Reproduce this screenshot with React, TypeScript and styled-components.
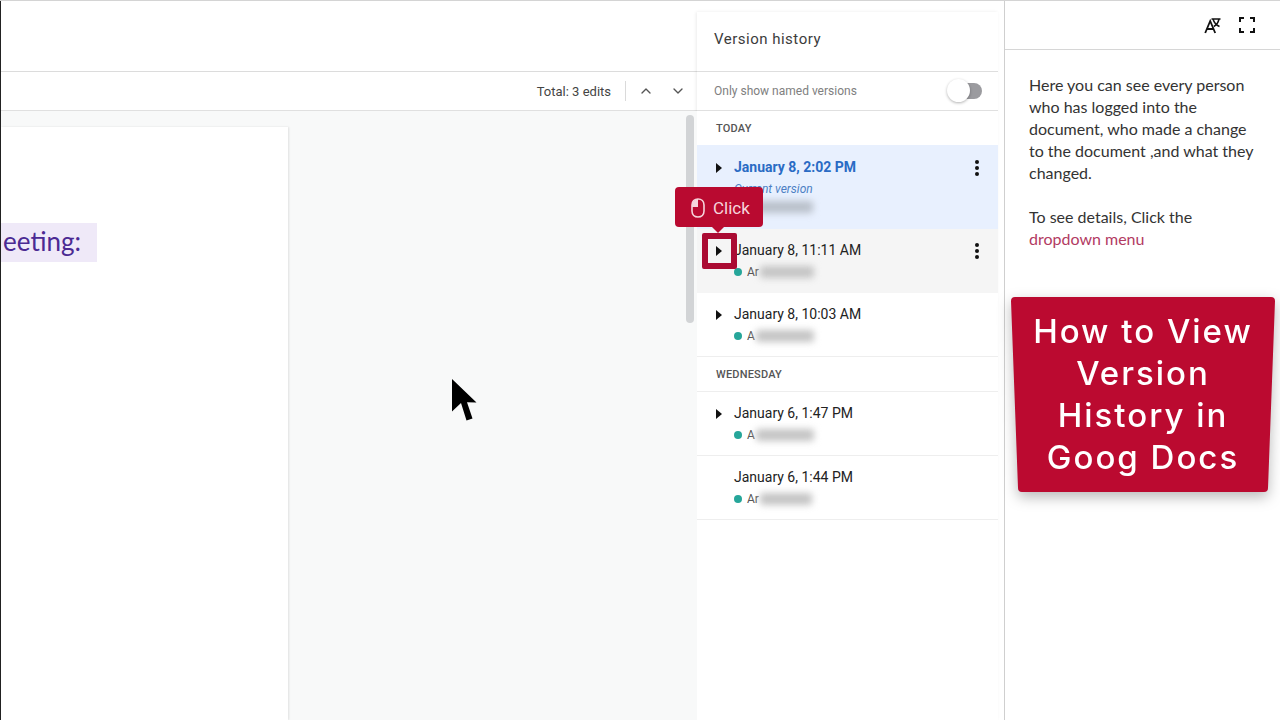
import React from "react";
import styled, { createGlobalStyle } from "styled-components";
import { ChevronUp, ChevronDown } from "lucide-react";

const GlobalStyle = createGlobalStyle`
  html, body {
    margin: 0;
    padding: 0;
    background: #fff;
    overflow: hidden;
  }
  * {
    box-sizing: border-box;
  }
`;

type Version = {
  time: string;
  initials: string;
  nameWidth: number;
  expandable?: boolean;
  current?: boolean;
  hovered?: boolean;
  menu?: boolean;
};

const today: Version[] = [
  { time: "January 8, 2:02 PM", initials: "", nameWidth: 78, expandable: true, current: true, menu: true },
  { time: "January 8, 11:11 AM", initials: "Ar", nameWidth: 54, expandable: true, hovered: true, menu: true },
  { time: "January 8, 10:03 AM", initials: "A", nameWidth: 58, expandable: true },
];

const wednesday: Version[] = [
  { time: "January 6, 1:47 PM", initials: "A", nameWidth: 58, expandable: true },
  { time: "January 6, 1:44 PM", initials: "Ar", nameWidth: 52 },
];

const VersionRow: React.FC<{ version: Version }> = ({ version }) => (
  <Row $current={version.current} $hovered={version.hovered}>
    <ArrowSlot>
      {version.expandable && (
        <svg width="8" height="10" viewBox="0 0 8 10">
          <path d="M1 0l6 5-6 5z" fill="#111" />
        </svg>
      )}
    </ArrowSlot>
    <RowBody>
      <Time $current={version.current}>{version.time}</Time>
      {version.current && <CurrentLabel>Current version</CurrentLabel>}
      <Author>
        {!version.current && <Dot />}
        {version.initials && <Initials>{version.initials}</Initials>}
        <BlurredName style={{ width: version.nameWidth }} $current={version.current} />
      </Author>
    </RowBody>
    {version.menu && (
      <MenuDots>
        <span />
        <span />
        <span />
      </MenuDots>
    )}
  </Row>
);

export default function App() {
  return (
    <Shell>
      <GlobalStyle />
      <DocColumn>
        <DocHeader />
        <DocToolbar>
          <EditCount>Total: 3 edits</EditCount>
          <ToolbarDivider />
          <ToolbarChevrons>
            <ChevronUp size={16} color="#555" strokeWidth={2} />
            <ChevronDown size={16} color="#555" strokeWidth={2} />
          </ToolbarChevrons>
        </DocToolbar>
        <DocBody>
          <Page>
            <Highlight>eeting:</Highlight>
          </Page>
          <ScrollThumb />
        </DocBody>
      </DocColumn>

      <HistoryPanel>
        <HistoryTitle>Version history</HistoryTitle>
        <ToggleRow>
          <ToggleLabel>Only show named versions</ToggleLabel>
          <Toggle>
            <Knob />
          </Toggle>
        </ToggleRow>
        <DayLabel $first>TODAY</DayLabel>
        {today.map((v) => (
          <VersionRow key={v.time} version={v} />
        ))}
        <DayLabel>WEDNESDAY</DayLabel>
        {wednesday.map((v) => (
          <VersionRow key={v.time} version={v} />
        ))}
      </HistoryPanel>

      <GuidePanel>
        <GuideBar>
          <svg width="18" height="18" viewBox="0 0 18 18" fill="none" stroke="#111">
            <path d="M1.200 17 6.200 5l5 12M3 13h6.600" strokeWidth="1.800" />
            <path d="M7.500 3h9M9 3c1 3.500 3 6 6.500 7.500M15 3c-.7 3.500-2.600 6-5.200 7.500" strokeWidth="1.500" />
          </svg>
          <svg width="18" height="18" viewBox="0 0 18 18" fill="none" stroke="#111" strokeWidth="2">
            <path d="M6 2H2v4M12 2h4v4M6 16H2v-4M12 16h4v-4" />
          </svg>
        </GuideBar>
        <GuideText>
          <p>
            Here you can see every person who has logged into the document, who made a change to the
            document ,and what they changed.
          </p>
          <p>
            To see details, Click the <GuideLink>dropdown menu</GuideLink>
          </p>
        </GuideText>
      </GuidePanel>

      <TitleCard>
        <TitleFace>
          How to View
          <br />
          Version
          <br />
          History in
          <br />
          Goog Docs
        </TitleFace>
      </TitleCard>

      <Callout>
        <svg width="14" height="20" viewBox="0 0 14 20" fill="none">
          <path d="M7 1C3.500 1 1 3.500 1 7v6c0 3.500 2.500 6 6 6s6-2.500 6-6V7c0-3.500-2.500-6-6-6z" stroke="#f6d5dc" strokeWidth="1.600" />
          <path d="M7 1C3.500 1 1 3.500 1 7v2h6z" fill="#f6d5dc" />
        </svg>
        Click
      </Callout>
      <ClickTarget />

      <Pointer width="28" height="46" viewBox="0 0 28 46">
        <path d="M1 1 25.500 24.500 16 24.200 21.500 40.500 15.500 42.500 10 25 1 33.500z" fill="#000" />
      </Pointer>
    </Shell>
  );
}

const Shell = styled.div`
  position: relative;
  display: flex;
  width: 1280px;
  height: 720px;
  overflow: hidden;
  border-top: 1px solid #d4d4d4;
  background: #fff;
  font-family: Roboto, "Liberation Sans", sans-serif;
`;

const DocColumn = styled.div`
  display: flex;
  flex-direction: column;
  width: 697px;
  flex-shrink: 0;
  border-left: 1px solid #222;
`;

const DocHeader = styled.div`
  height: 71px;
  flex-shrink: 0;
  border-bottom: 1px solid #dcdcdc;
`;

const DocToolbar = styled.div`
  display: flex;
  align-items: center;
  justify-content: flex-end;
  height: 39px;
  flex-shrink: 0;
  padding-right: 11px;
  border-bottom: 1px solid #e0e0e0;
`;

const EditCount = styled.span`
  font-size: 13px;
  color: #444;
`;

const ToolbarDivider = styled.div`
  width: 1px;
  height: 20px;
  margin: 0 12px 0 14px;
  background: #dadada;
`;

const ToolbarChevrons = styled.div`
  display: flex;
  gap: 16px;
`;

const DocBody = styled.div`
  position: relative;
  flex: 1;
  padding-top: 16px;
  background: #f8f9f9;
`;

const Page = styled.div`
  width: 287px;
  height: 100%;
  padding-top: 96px;
  background: #fff;
  box-shadow: 1px 0 2px rgba(0, 0, 0, 0.1);
`;

const Highlight = styled.div`
  display: flex;
  align-items: center;
  justify-content: flex-end;
  width: 96px;
  height: 39px;
  padding: 0 16px 3px 0;
  overflow: hidden;
  white-space: nowrap;
  background: #efe9f8;
  color: #4b2a93;
  font-family: Lato, "Noto Sans", sans-serif;
  font-size: 26px;
`;

const ScrollThumb = styled.div`
  position: absolute;
  top: 4px;
  right: 3px;
  width: 8px;
  height: 208px;
  border-radius: 4px;
  background: #d2d4d6;
`;

const HistoryPanel = styled.div`
  display: flex;
  flex-direction: column;
  width: 301px;
  margin: 11px 6px 0 0;
  flex-shrink: 0;
  background: #fff;
  box-shadow: -1px 0 3px rgba(0, 0, 0, 0.08);
`;

const HistoryTitle = styled.div`
  display: flex;
  align-items: center;
  height: 60px;
  padding: 0 0 6px 17px;
  flex-shrink: 0;
  font-size: 15px;
  letter-spacing: 0.5px;
  color: #3c3c3c;
  border-bottom: 1px solid #dedede;
`;

const ToggleRow = styled.div`
  display: flex;
  align-items: center;
  justify-content: space-between;
  height: 39px;
  padding: 0 16px 0 17px;
  flex-shrink: 0;
  border-bottom: 1px solid #e0e0e0;
`;

const ToggleLabel = styled.span`
  font-size: 12px;
  color: #808080;
`;

const Toggle = styled.div`
  position: relative;
  width: 32px;
  height: 16px;
  border-radius: 8px;
  background: #9b9b9f;
`;

const Knob = styled.div`
  position: absolute;
  top: -4px;
  left: -3px;
  width: 23px;
  height: 23px;
  border-radius: 50%;
  background: #fff;
  box-shadow: 0 1px 3px rgba(0, 0, 0, 0.3);
`;

const DayLabel = styled.div<{ $first?: boolean }>`
  display: flex;
  align-items: center;
  height: ${(p) => (p.$first ? "34px" : "35px")};
  padding-left: 19px;
  flex-shrink: 0;
  font-size: 11px;
  font-weight: 500;
  letter-spacing: 0.2px;
  color: #555;
  border-bottom: ${(p) => (p.$first ? "none" : "1px solid #eee")};
`;

const Row = styled.div<{ $current?: boolean; $hovered?: boolean }>`
  display: flex;
  align-items: flex-start;
  height: ${(p) => (p.$current ? "84px" : "64px")};
  padding: ${(p) => (p.$current ? "13px" : "12px")} 0 0;
  flex-shrink: 0;
  background: ${(p) => (p.$current ? "#e8f0fe" : p.$hovered ? "#f5f5f5" : "#fff")};
  border-bottom: 1px solid ${(p) => (p.$current || p.$hovered ? "transparent" : "#eeeeee")};
`;

const ArrowSlot = styled.div`
  display: flex;
  align-items: center;
  justify-content: center;
  width: 37px;
  height: 18px;
  margin-top: 1px;
  padding-left: 6px;
  flex-shrink: 0;
`;

const RowBody = styled.div`
  flex: 1;
  min-width: 0;
`;

const Time = styled.div<{ $current?: boolean }>`
  height: 18px;
  line-height: 18px;
  font-size: 14px;
  font-weight: ${(p) => (p.$current ? 700 : 400)};
  color: ${(p) => (p.$current ? "#2a6bc4" : "#222")};
`;

const CurrentLabel = styled.div`
  height: 15px;
  margin: 5px 0 -2px;
  line-height: 16px;
  font-size: 12px;
  font-style: italic;
  color: #4d7fc4;
`;

const Author = styled.div`
  display: flex;
  align-items: center;
  height: 18px;
  margin-top: 4px;
`;

const Dot = styled.span`
  width: 8px;
  height: 8px;
  margin-right: 5px;
  border-radius: 50%;
  background: #26a69a;
`;

const Initials = styled.span`
  font-size: 12px;
  color: #555;
`;

const BlurredName = styled.span<{ $current?: boolean }>`
  height: 12px;
  margin-left: 1px;
  border-radius: 3px;
  background: ${(p) => (p.$current ? "#b9c0ca" : "#c4c4c4")};
  filter: blur(3.5px);
`;

const MenuDots = styled.div`
  display: flex;
  flex-direction: column;
  gap: 2px;
  width: 4px;
  margin: 2px 19px 0 0;

  span {
    width: 4px;
    height: 4px;
    border-radius: 50%;
    background: #111;
  }
`;

const GuidePanel = styled.div`
  flex: 1;
  min-width: 0;
  border-left: 1px solid #cfcfcf;
`;

const GuideBar = styled.div`
  display: flex;
  align-items: center;
  justify-content: flex-end;
  gap: 16px;
  height: 49px;
  padding-right: 24px;
  border-bottom: 1px solid #d6d6d6;
`;

const GuideText = styled.div`
  padding: 24px 24px 0;
  font-family: Lato, "Liberation Sans", sans-serif;
  font-size: 16px;
  line-height: 22px;
  color: #333;

  p {
    margin: 0 0 22px;
  }
`;

const GuideLink = styled.span`
  color: #b23a62;
`;

const TitleCard = styled.div`
  position: absolute;
  top: 296px;
  left: 1011px;
  width: 264px;
  height: 195px;
  filter: drop-shadow(0 5px 7px rgba(0, 0, 0, 0.28));
`;

const TitleFace = styled.div`
  display: flex;
  flex-direction: column;
  align-items: center;
  justify-content: center;
  width: 100%;
  height: 100%;
  padding-bottom: 1px;
  clip-path: path("M4 0H260Q264 0 264 4L257 191Q257 195 253 195H11Q7 195 7 191L0 4Q0 0 4 0Z");
  background: #bb0a30;
  color: #fff;
  font-family: Inter, Lato, sans-serif;
  font-size: 33px;
  font-weight: 500;
  letter-spacing: 2px;
  line-height: 42px;
  text-align: center;
`;

const Callout = styled.div`
  position: absolute;
  top: 186px;
  left: 675px;
  display: flex;
  align-items: center;
  gap: 8px;
  width: 88px;
  height: 40px;
  padding: 1px 0 0 16px;
  border-radius: 4px;
  background: #b90a30;
  color: #f6d5dc;
  font-size: 17px;

  &::after {
    content: "";
    position: absolute;
    left: 37px;
    bottom: -6px;
    border-left: 6px solid transparent;
    border-right: 6px solid transparent;
    border-top: 6px solid #b90a30;
  }
`;

const ClickTarget = styled.div`
  position: absolute;
  top: 232px;
  left: 702px;
  width: 35px;
  height: 36px;
  border: 6px solid #ab0b33;
  border-radius: 2px;
`;

const Pointer = styled.svg`
  position: absolute;
  top: 377px;
  left: 451px;
`;
